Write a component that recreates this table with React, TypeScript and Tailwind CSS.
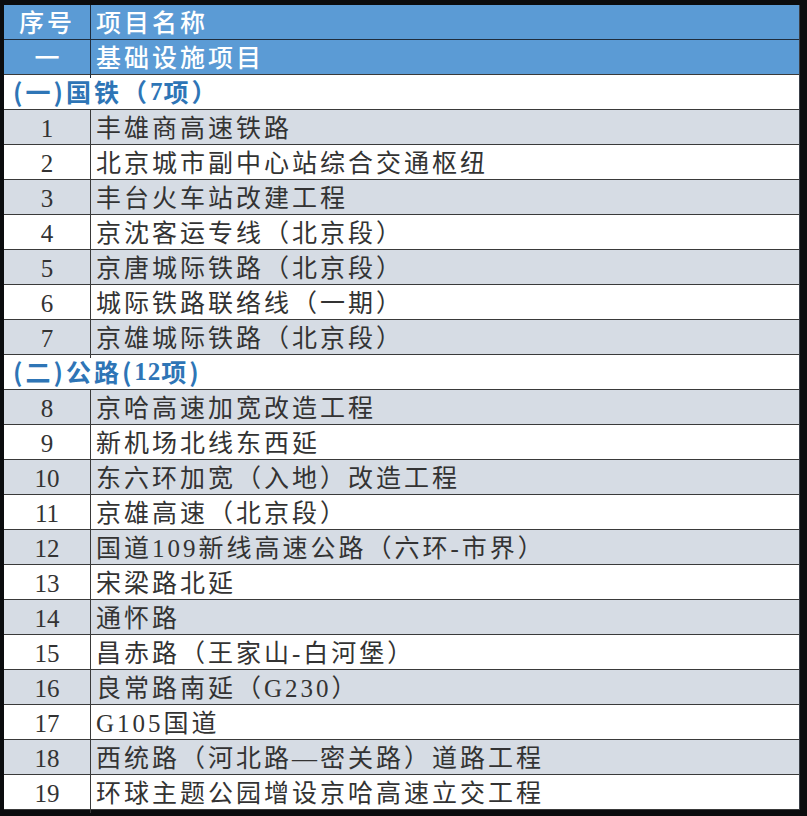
import React from "react";

type Row =
  | { kind: "section"; text: string }
  | { kind: "item"; no: string; name: string };

const rows: Row[] = [
  { kind: "section", text: "(一)国铁（7项）" },
  { kind: "item", no: "1", name: "丰雄商高速铁路" },
  { kind: "item", no: "2", name: "北京城市副中心站综合交通枢纽" },
  { kind: "item", no: "3", name: "丰台火车站改建工程" },
  { kind: "item", no: "4", name: "京沈客运专线（北京段）" },
  { kind: "item", no: "5", name: "京唐城际铁路（北京段）" },
  { kind: "item", no: "6", name: "城际铁路联络线（一期）" },
  { kind: "item", no: "7", name: "京雄城际铁路（北京段）" },
  { kind: "section", text: "(二)公路(12项)" },
  { kind: "item", no: "8", name: "京哈高速加宽改造工程" },
  { kind: "item", no: "9", name: "新机场北线东西延" },
  { kind: "item", no: "10", name: "东六环加宽（入地）改造工程" },
  { kind: "item", no: "11", name: "京雄高速（北京段）" },
  { kind: "item", no: "12", name: "国道109新线高速公路（六环-市界）" },
  { kind: "item", no: "13", name: "宋梁路北延" },
  { kind: "item", no: "14", name: "通怀路" },
  { kind: "item", no: "15", name: "昌赤路（王家山-白河堡）" },
  { kind: "item", no: "16", name: "良常路南延（G230）" },
  { kind: "item", no: "17", name: "G105国道" },
  { kind: "item", no: "18", name: "西统路（河北路—密关路）道路工程" },
  { kind: "item", no: "19", name: "环球主题公园增设京哈高速立交工程" },
];

const serif = { fontFamily: '"Liberation Serif", "Noto Sans CJK SC", serif' };
const cjk = { fontFamily: '"Noto Sans CJK SC", sans-serif' };

// digits in the section titles are set in a serif face, the rest in the CJK face
const Section: React.FC<{ text: string }> = ({ text }) => (
  <>
    {text.split(/(\d+)/).map((part, i) =>
      /^\d+$/.test(part) ? (
        <span key={i} style={serif} className="tracking-[1px]">
          {part}
        </span>
      ) : (
        <span key={i} style={cjk}>
          {part}
        </span>
      )
    )}
  </>
);

const App: React.FC = () => {
  return (
    <div className="w-[807px] h-[816px] bg-[#0b0c0e] pt-[5px] pl-[4px] overflow-hidden" style={serif}>
      <div className="w-[796px] border-r border-[#3a3f47]">
        {/* header */}
        <div className="grid grid-cols-[87px_1fr] h-[35px] bg-[#5b9bd5] border-b border-[#1f2d3d] text-white text-[25px] font-medium">
          <div className="flex items-center justify-center border-r border-[#1f2d3d] tracking-[3px]">序号</div>
          <div className="flex items-center pl-[5px] tracking-[3px]">项目名称</div>
        </div>
        <div className="grid grid-cols-[87px_1fr] h-[35px] bg-[#5b9bd5] border-b border-[#3a3a3a] text-white text-[25px] font-medium">
          <div className="flex items-center justify-center border-r border-[#1f2d3d]">一</div>
          <div className="flex items-center pl-[5px] tracking-[3px]">基础设施项目</div>
        </div>
        {rows.map((r, i) => {
          if (r.kind === "section") {
            return (
              <div
                key={i}
                className="h-[35px] bg-white border-b border-[#3a3a3a] flex items-center pl-[9px] text-[25px] font-bold text-[#2e75b6] tracking-[3px]"
              >
                <Section text={r.text} />
              </div>
            );
          }
          const n = parseInt(r.no, 10);
          const grey = n <= 7 ? n % 2 === 1 : n % 2 === 0;
          return (
            <div
              key={i}
              className={
                "grid grid-cols-[87px_1fr] h-[35px] border-b border-[#3a3a3a] text-[25px] text-[#333333] " +
                (grey ? "bg-[#d6dce4]" : "bg-white")
              }
            >
              <div className="flex items-center justify-center border-r border-[#3a3a3a]">{r.no}</div>
              <div className="flex items-center pl-[5px] tracking-[3px] whitespace-nowrap">{r.name}</div>
            </div>
          );
        })}
      </div>
    </div>
  );
};

export default App;
